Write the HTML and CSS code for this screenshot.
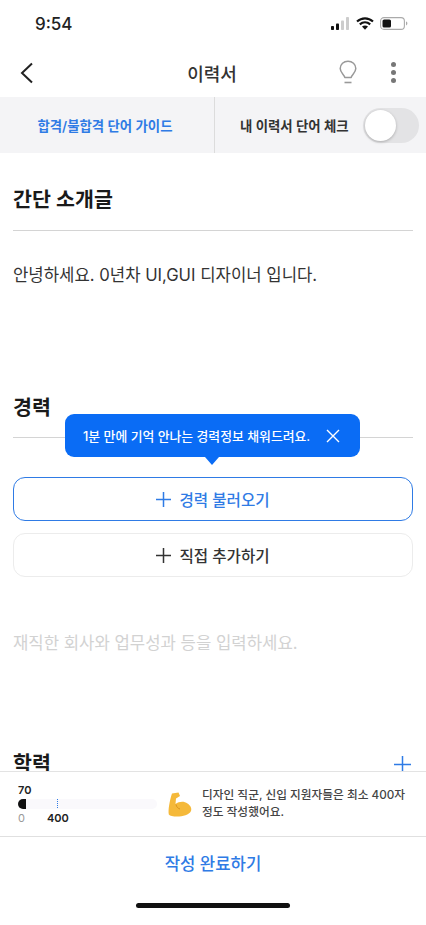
FILE: index.html
```html
<!DOCTYPE html>
<html lang="ko">
<head>
  <meta charset="UTF-8">
  <title>이력서</title>
  <link rel="stylesheet" href="styles.css">
</head>
<body>
  <div class="phone">
    <div class="status">
      <span class="time">9:54</span>
      <div class="status-icons">
        <svg width="19" height="13" viewBox="0 0 19 13">
          <rect x="0" y="9" width="3" height="4" rx="0.8" fill="#111"/>
          <rect x="5" y="6.5" width="3" height="6.5" rx="0.8" fill="#111"/>
          <rect x="10" y="3.5" width="3" height="9.5" rx="0.8" fill="#ccc"/>
          <rect x="15" y="0" width="3" height="13" rx="0.8" fill="#ccc"/>
        </svg>
        <svg width="18" height="13" viewBox="0 0 18 13">
          <path d="M1 4.6C5.7 0.3 12.3 0.3 17 4.6M3.8 7.4C6.9 4.7 11.1 4.7 14.2 7.4" fill="none" stroke="#111" stroke-width="2.1"/>
          <path d="M6 9.6C7.8 8.2 10.2 8.2 12 9.6L9 12.8Z" fill="#111"/>
        </svg>
        <svg width="28" height="13" viewBox="0 0 28 13">
          <rect x="0.6" y="0.6" width="23.8" height="11.8" rx="3.4" fill="none" stroke="#aaa" stroke-width="1.1"/>
          <rect x="2.5" y="2.5" width="8.5" height="8" rx="1.6" fill="#111"/>
          <path d="M26 4.6C27 5 27.4 5.7 27.4 6.5S27 8 26 8.4Z" fill="#aaa"/>
        </svg>
      </div>
    </div>

    <div class="nav">
      <svg class="back" width="14" height="22" viewBox="0 0 14 22">
        <path d="M12 1.5L2 11L12 20.5" fill="none" stroke="#222" stroke-width="2"/>
      </svg>
      <h1 class="nav-title">이력서</h1>
      <svg class="bulb" width="18" height="25" viewBox="0 0 18 25">
        <path d="M5.8 17.5C5.6 14.8 1.2 12.8 1.2 8.6C1.2 4.3 4.7 1.2 9 1.2S16.8 4.3 16.8 8.6C16.8 12.8 12.4 14.8 12.2 17.5Z" fill="none" stroke="#999" stroke-width="1.5" stroke-linejoin="round"/>
        <path d="M5.5 22.5H12.5" stroke="#999" stroke-width="1.6"/>
      </svg>
      <div class="dots"><i></i><i></i><i></i></div>
    </div>

    <div class="tabs">
      <div class="tab tab-guide">합격/불합격 단어 가이드</div>
      <div class="tab tab-check">
        <span>내 이력서 단어 체크</span>
        <div class="toggle"><i></i></div>
      </div>
    </div>

    <div class="content">
      <section class="intro">
        <h2 class="sec-title">간단 소개글</h2>
        <p class="intro-text">안녕하세요. 0년차 UI,GUI 디자이너 입니다.</p>
      </section>

      <section class="career">
        <h2 class="sec-title">경력</h2>
        <div class="tip">
          <span>1분 만에 기억 안나는 경력정보 채워드려요.</span>
          <svg width="14" height="14" viewBox="0 0 14 14">
            <path d="M1 1L13 13M13 1L1 13" stroke="#fff" stroke-width="1.4"/>
          </svg>
        </div>
        <button class="btn btn-load">
          <svg width="15" height="15" viewBox="0 0 15 15"><path d="M7.5 0V15M0 7.5H15" stroke="#2f7be5" stroke-width="1.5"/></svg>
          경력 불러오기
        </button>
        <button class="btn btn-add">
          <svg width="15" height="15" viewBox="0 0 15 15"><path d="M7.5 0V15M0 7.5H15" stroke="#333" stroke-width="1.5"/></svg>
          직접 추가하기
        </button>
        <p class="placeholder">재직한 회사와 업무성과 등을 입력하세요.</p>
      </section>

      <section class="edu">
        <h2 class="sec-title">학력</h2>
        <svg width="17" height="17" viewBox="0 0 17 17"><path d="M8.5 0V17M0 8.5H17" stroke="#2f7be5" stroke-width="1.5"/></svg>
      </section>
    </div>

    <div class="counter">
      <div class="meter">
        <div class="meter-now">70</div>
        <div class="bar"><i class="bar-fill"></i><i class="bar-mark"></i></div>
        <div class="meter-scale"><span class="zero">0</span><span class="goal">400</span></div>
      </div>
      <svg class="arm" width="24" height="25" viewBox="0 0 24 25">
        <path d="M4 1.5L10.5 0.5L12 4L8 6.5L7.5 12C11 9.5 16 9 19.5 11.5C22.5 13.5 24 16.5 23 19C21 23 15 24.5 9 24.5C5 24.5 2 24 0.8 22.5C0 18 1.5 9 4 1.5Z" fill="#f5b93a"/>
        <path d="M8 12.5C8.5 15 10 16.5 12 17" fill="none" stroke="#d8931f" stroke-width="1"/>
      </svg>
      <p class="counter-text">디자인 직군, 신입 지원자들은 최소 400자<br>정도 작성했어요.</p>
    </div>

    <div class="footer">
      <div class="submit">작성 완료하기</div>
      <div class="home-bar"></div>
    </div>
  </div>
</body>
</html>
```

FILE: styles.css
```css
* {
  padding: 0;
  margin: 0;
  border: 0;
  box-sizing: border-box;
}
body {
  background: #fff;
  font-family: "Inter", "Noto Sans CJK KR", sans-serif;
  color: #222;
}
.phone {
  width: 426px;
  height: 925px;
  display: flex;
  flex-direction: column;
  overflow: hidden;
}

/* status bar */
.status {
  height: 48px;
  flex: none;
  display: flex;
  align-items: center;
  justify-content: space-between;
  padding: 0 18px 1px 35px;
}
.time {
  font-size: 17px;
  font-weight: 500;
  color: #222;
}
.status-icons {
  display: flex;
  align-items: center;
  gap: 6px;
}

/* nav */
.nav {
  height: 49px;
  flex: none;
  display: flex;
  align-items: center;
  padding: 0 30px 0 20px;
}
.nav-title {
  flex: 1;
  text-align: center;
  font-size: 18px;
  font-weight: 500;
  color: #333;
  padding-left: 51px;
}
.bulb {
  margin-right: 34px;
}
.dots {
  display: flex;
  flex-direction: column;
  gap: 3px;
}
.dots i {
  width: 5px;
  height: 5px;
  border-radius: 50%;
  background: #777;
}

/* tabs */
.tabs {
  height: 56px;
  flex: none;
  display: flex;
  background: #f4f4f6;
}
.tab {
  display: flex;
  align-items: center;
  font-size: 13.4px;
  font-weight: 600;
}
.tab-guide {
  width: 215px;
  justify-content: center;
  padding-right: 4px;
  color: #2f7be5;
  border-right: 1px solid #dcdcdc;
}
.tab-check {
  flex: 1;
  padding-left: 25px;
  color: #333;
}
.toggle {
  width: 56px;
  height: 35px;
  margin-left: 14px;
  border-radius: 18px;
  background: #e3e3e5;
  padding: 2px;
}
.toggle i {
  display: block;
  width: 31px;
  height: 31px;
  border-radius: 50%;
  background: #fff;
  box-shadow: 0 1px 3px rgba(0, 0, 0, 0.25);
}

/* content */
.content {
  flex: 1;
  min-height: 0;
  overflow: hidden;
  padding: 0 13px;
}
.sec-title {
  font-size: 20.6px;
  font-weight: 600;
  line-height: 30px;
  color: #1a1a1a;
}
.intro {
  padding-top: 32px;
}
.intro .sec-title {
  border-bottom: 1px solid #d4d4d4;
  height: 46px;
}
.intro-text {
  margin-top: 32px;
  font-size: 16.7px;
  line-height: 24px;
  color: #333;
}
.career {
  position: relative;
  margin-top: 106px;
}
.career .sec-title {
  height: 45px;
  border-bottom: 1px solid #d4d4d4;
}
.tip {
  position: absolute;
  top: 21px;
  left: 52px;
  width: 295px;
  height: 43px;
  display: flex;
  align-items: center;
  justify-content: space-between;
  padding: 0 20px 0 18px;
  border-radius: 9px;
  background: #0a6cf5;
  color: #fff;
  font-size: 12.85px;
  font-weight: 500;
}
.tip::after {
  content: "";
  position: absolute;
  left: 140px;
  bottom: -8px;
  border-left: 7px solid transparent;
  border-right: 7px solid transparent;
  border-top: 8px solid #0a6cf5;
}
.btn {
  width: 100%;
  height: 44px;
  display: flex;
  align-items: center;
  justify-content: center;
  gap: 8px;
  background: #fff;
  border-radius: 12px;
  font-family: inherit;
  font-size: 15.6px;
  font-weight: 500;
}
.btn-load {
  margin-top: 39px;
  border: 1.5px solid #2f7be5;
  color: #2f7be5;
}
.btn-add {
  margin-top: 12px;
  border: 1px solid #ececec;
  color: #333;
}
.placeholder {
  margin-top: 54px;
  font-size: 16.7px;
  line-height: 24px;
  color: #d2d2d2;
}
.edu {
  margin-top: 94px;
  display: flex;
  justify-content: space-between;
  align-items: center;
  padding-right: 2px;
}

/* counter */
.counter {
  height: 66px;
  flex: none;
  display: flex;
  align-items: center;
  padding: 0 18px;
  border-top: 1px solid #e3e3e3;
  border-bottom: 1px solid #e0e0e0;
}
.meter {
  width: 139px;
  flex: none;
  font-size: 11px;
  font-weight: 600;
  line-height: 14px;
}
.bar {
  position: relative;
  height: 10px;
  margin: 2px 0;
  border-radius: 5px;
  background: #faf9fc;
}
.bar-fill {
  display: block;
  width: 8px;
  height: 10px;
  border-radius: 5px 0 0 5px;
  background: #111;
}
.bar-mark {
  position: absolute;
  top: 0;
  left: 39px;
  width: 1px;
  height: 10px;
  background: repeating-linear-gradient(#2f7be5 0 1px, transparent 1px 2px);
}
.meter-scale {
  display: flex;
  gap: 22px;
}
.zero {
  color: #999;
  font-weight: 400;
}
.arm {
  margin-left: 11px;
  flex: none;
}
.counter-text {
  margin-left: 10px;
  font-size: 11.7px;
  font-weight: 500;
  line-height: 17px;
  color: #444;
  white-space: nowrap;
}

/* footer */
.footer {
  height: 88px;
  flex: none;
  display: flex;
  flex-direction: column;
  align-items: center;
}
.submit {
  margin-top: 15px;
  font-size: 16.7px;
  font-weight: 500;
  line-height: 24px;
  color: #2f7be5;
}
.home-bar {
  width: 154px;
  height: 5px;
  margin-top: 27px;
  border-radius: 3px;
  background: #111;
}
```
